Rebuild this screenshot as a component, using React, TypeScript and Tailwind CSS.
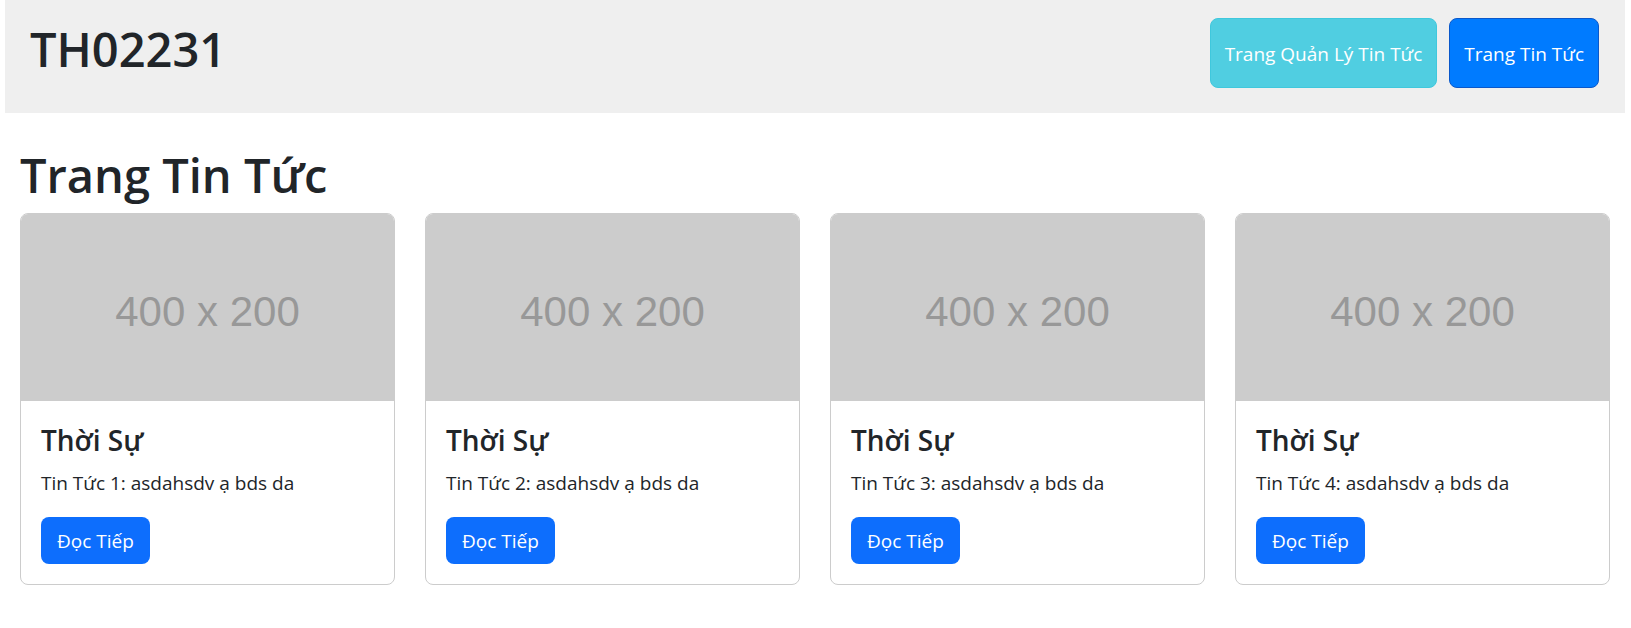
const articles = [
  { id: 1, title: 'Thời Sự', text: 'Tin Tức 1: asdahsdv ạ bds da' },
  { id: 2, title: 'Thời Sự', text: 'Tin Tức 2: asdahsdv ạ bds da' },
  { id: 3, title: 'Thời Sự', text: 'Tin Tức 3: asdahsdv ạ bds da' },
  { id: 4, title: 'Thời Sự', text: 'Tin Tức 4: asdahsdv ạ bds da' },
];

function Header() {
  return (
    <header className="mr-[6px] ml-[5px] flex items-start justify-between bg-[#efefef] pt-[18px] pr-[26px] pb-[25px] pl-[25px]">
      <h1 className="pt-px text-[47px] leading-[60px] font-semibold">TH02231</h1>
      <nav className="flex gap-3 text-[19px] leading-[30px] text-white">
        <a
          href="#manage"
          className="rounded-lg border border-[#3fc8dd] bg-[#50cee1] px-[14px] pt-5 pb-[18px]"
        >
          Trang Quản Lý Tin Tức
        </a>
        <a
          href="#news"
          className="rounded-lg border border-[#0a58ca] bg-[#007bff] px-[14px] pt-5 pb-[18px]"
        >
          Trang Tin Tức
        </a>
      </nav>
    </header>
  );
}

function NewsCard({ title, text }: { title: string; text: string }) {
  return (
    <article className="overflow-hidden rounded-lg border border-[#cccccc] bg-white">
      <div className="flex aspect-[2/1] items-center justify-center bg-[#cccccc] pt-[10px] font-['Liberation_Sans',Arial,sans-serif] text-[42px] leading-none text-[#989898]">
        400 x 200
      </div>
      <div className="flex flex-col items-start p-5">
        <h2 className="mb-[10px] pt-px text-[28px] leading-[36px] font-semibold">{title}</h2>
        <p className="mb-[19px] text-[19px] leading-[30px]">{text}</p>
        <button
          type="button"
          className="rounded-lg bg-[#0d6efd] px-4 pt-[9px] pb-[7px] text-[19px] leading-[31px] text-white"
        >
          Đọc Tiếp
        </button>
      </div>
    </article>
  );
}

export default function App() {
  return (
    <div className="min-h-screen bg-white font-['Open_Sans','Noto_Sans',sans-serif] text-[#212529]">
      <Header />
      <main className="pt-[32px] pr-[21px] pb-10 pl-5">
        <h1 className="mb-[8px] text-[47px] leading-[60px] font-semibold">Trang Tin Tức</h1>
        <div className="grid grid-cols-1 gap-[30px] sm:grid-cols-2 lg:grid-cols-4">
          {articles.map((article) => (
            <NewsCard key={article.id} title={article.title} text={article.text} />
          ))}
        </div>
      </main>
    </div>
  );
}
